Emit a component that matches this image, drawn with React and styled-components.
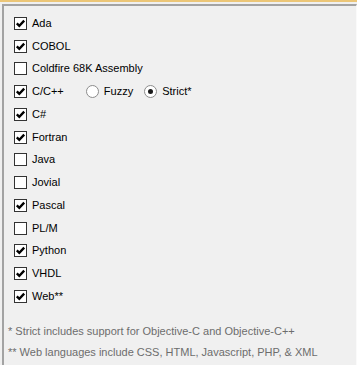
import React, { useState } from 'react';
import styled, { createGlobalStyle } from 'styled-components';

const GlobalStyle = createGlobalStyle`
  html, body {
    margin: 0;
    padding: 0;
    background: #f0f0f0;
  }
  body {
    font-family: "Liberation Sans", Arial, sans-serif;
    font-size: 11px;
    color: #000;
  }
`;

const Window = styled.div`
  width: 357px;
  height: 365px;
  background: #f0f0f0;
  overflow: hidden;
  border-top: 2px solid #ecc677;
  box-sizing: border-box;
`;

const Panel = styled.div`
  margin: 2px 0 0 2px;
  height: 361px;
  border-top: 2px solid #a3a3a3;
  border-left: 2px solid #a3a3a3;
  border-right: 1px solid #fafafa;
  box-sizing: border-box;
  display: flex;
  flex-direction: column;
  padding: 6px 0 0 10px;
`;

const List = styled.div`
  display: flex;
  flex-direction: column;
`;

const Row = styled.div`
  display: flex;
  align-items: center;
  height: 22.75px;
  gap: 5px;
`;

const Option = styled.label`
  display: flex;
  align-items: center;
  gap: 5px;
  cursor: default;
`;

const Box = styled.span`
  width: 13px;
  height: 13px;
  box-sizing: border-box;
  border: 1px solid #333;
  background: #fff;
  display: flex;
  align-items: center;
  justify-content: center;
`;

const Radios = styled.div`
  display: flex;
  align-items: center;
  gap: 11px;
  margin-left: 17px;
`;

const Circle = styled.span`
  width: 13px;
  height: 13px;
  box-sizing: border-box;
  border-radius: 50%;
  border: 1px solid #8c8c8c;
  background: #fff;
  display: flex;
  align-items: center;
  justify-content: center;
  &::after {
    content: '';
    width: 5px;
    height: 5px;
    border-radius: 50%;
    background: ${p => (p.$on ? '#1a1a1a' : 'transparent')};
  }
`;

const Label = styled.span`
  line-height: 13px;
  white-space: nowrap;
`;

const Notes = styled.div`
  margin-top: 17px;
  margin-left: -6px;
  display: flex;
  flex-direction: column;
  gap: 8px;
  color: #6d6d6d;
`;

const Note = styled.div`
  line-height: 13px;
  white-space: nowrap;
`;

const Check = () => (
  <svg width="11" height="11" viewBox="0 0 11 11">
    <path d="M1.8 5.4 L4.3 7.9 L9.2 2.6" fill="none" stroke="#000" strokeWidth="2.3" />
  </svg>
);

const Checkbox = ({ checked, label, onToggle }) => (
  <Option onClick={onToggle}>
    <Box>{checked && <Check />}</Box>
    <Label>{label}</Label>
  </Option>
);

const LANGS = [
  ['Ada', true],
  ['COBOL', true],
  ['Coldfire 68K Assembly', false],
  ['C/C++', true],
  ['C#', true],
  ['Fortran', true],
  ['Java', false],
  ['Jovial', false],
  ['Pascal', true],
  ['PL/M', false],
  ['Python', true],
  ['VHDL', true],
  ['Web**', true],
];

export default function App() {
  const [langs, setLangs] = useState(() => Object.fromEntries(LANGS));
  const [mode, setMode] = useState('strict');

  const toggle = name => setLangs(s => ({ ...s, [name]: !s[name] }));

  return (
    <>
      <GlobalStyle />
      <Window>
        <Panel>
          <List>
            {LANGS.map(([name]) => (
              <Row key={name}>
                <Checkbox checked={langs[name]} label={name} onToggle={() => toggle(name)} />
                {name === 'C/C++' && (
                  <Radios>
                    <Option onClick={() => setMode('fuzzy')}>
                      <Circle $on={mode === 'fuzzy'} />
                      <Label>Fuzzy</Label>
                    </Option>
                    <Option onClick={() => setMode('strict')}>
                      <Circle $on={mode === 'strict'} />
                      <Label>Strict*</Label>
                    </Option>
                  </Radios>
                )}
              </Row>
            ))}
          </List>
          <Notes>
            <Note>* Strict includes support for Objective-C and Objective-C++</Note>
            <Note>** Web languages include CSS, HTML, Javascript, PHP, &amp; XML</Note>
          </Notes>
        </Panel>
      </Window>
    </>
  );
}
